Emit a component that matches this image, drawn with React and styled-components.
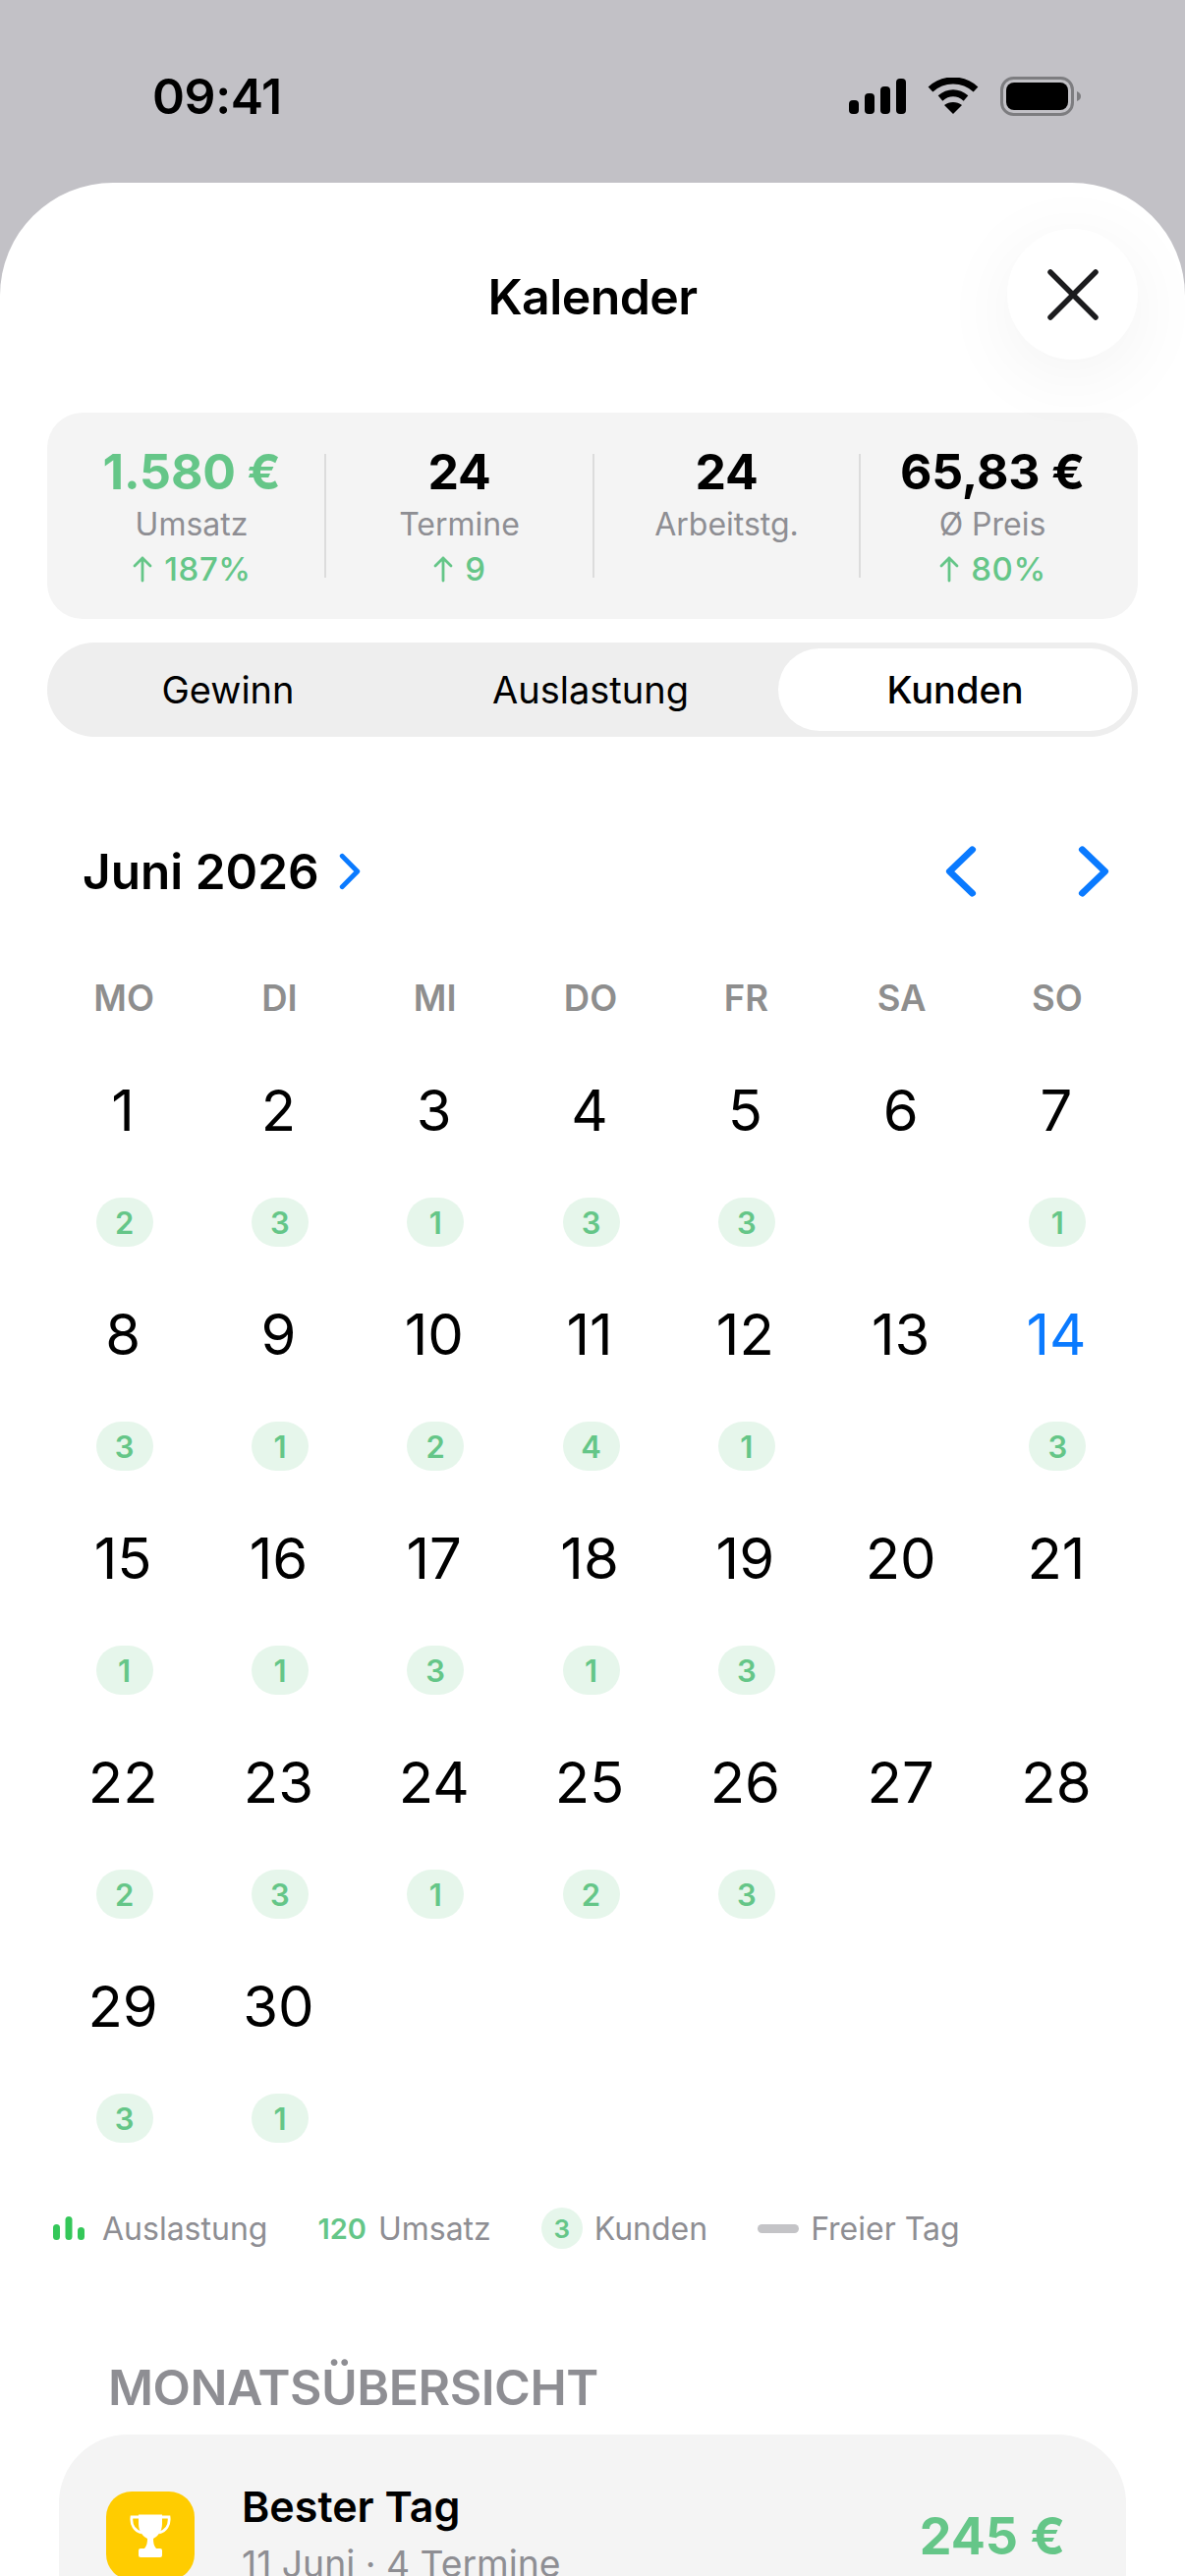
import styled, { createGlobalStyle } from "styled-components";
import { X } from "lucide-react";

const GlobalStyle = createGlobalStyle`
  html, body {
    margin: 0;
    padding: 0;
    background: #c2c1c6;
  }
  * {
    box-sizing: border-box;
  }
`

const Screen = styled.div`
  width: 1206px;
  height: 2622px;
  overflow: hidden;
  background: #c2c1c6;
  font-family: Inter, "Noto Sans", sans-serif;
  color: #000;
`

const StatusBar = styled.div`
  display: flex;
  justify-content: space-between;
  align-items: center;
  height: 186px;
  padding: 10px 106px 0 155px;
`

const Time = styled.div`
  font-size: 50px;
  font-weight: 600;
  letter-spacing: -0.4px;
`

const StatusIcons = styled.div`
  display: flex;
  align-items: center;
  gap: 22px;
`

const Sheet = styled.div`
  position: relative;
  height: 2436px;
  background: #fff;
  border-radius: 115px 115px 0 0;
`

const Header = styled.div`
  height: 234px;
  padding-bottom: 3px;
  display: flex;
  justify-content: center;
  align-items: center;
  font-size: 50px;
  font-weight: 600;
  letter-spacing: -0.6px;
`

const CloseButton = styled.div`
  position: absolute;
  top: 47px;
  right: 48px;
  width: 133px;
  height: 133px;
  border-radius: 50%;
  background: #fff;
  box-shadow: 0 16px 80px rgba(0, 0, 0, 0.055);
  display: flex;
  align-items: center;
  justify-content: center;
  color: #1c1c1e;
`

const StatsCard = styled.div`
  display: grid;
  grid-template-columns: 284px 273px 271px 1fr;
  margin: 0 48px;
  height: 210px;
  padding-top: 42px;
  background: #f4f4f4;
  border-radius: 36px;
`

const Stat = styled.div`
  height: 126px;
  display: flex;
  flex-direction: column;
  align-items: center;
  border-right: 2px solid #dcdcdc;

  &:first-child {
    padding-left: 12px;
  }

  &:last-child {
    padding-right: 14px;
    border-right: none;
  }
`

const StatValue = styled.div`
  font-size: 50px;
  line-height: 50px;
  margin-top: -7px;
  font-weight: 700;
  letter-spacing: -0.2px;
  white-space: nowrap;
  color: ${props => props.$green ? "#65c688" : "#000"};
`

const StatLabel = styled.div`
  font-size: 32px;
  line-height: 38px;
  margin-top: 10px;
  color: #8e8e93;
`

const StatDelta = styled.div`
  display: flex;
  align-items: center;
  gap: 11px;
  font-size: 33px;
  line-height: 38px;
  margin-top: 7px;
  font-weight: 500;
  letter-spacing: 0.6px;
  color: #65c688;
`

const Segments = styled.div`
  display: grid;
  grid-template-columns: 356px 382px 360px;
  align-items: center;
  margin: 24px 48px 0;
  height: 96px;
  padding: 6px;
  background: #eeeeee;
  border-radius: 48px;
`

const Segment = styled.div`
  height: 84px;
  display: flex;
  align-items: center;
  justify-content: center;
  border-radius: 42px;
  font-size: 38px;
  font-weight: ${props => props.$active ? 500 : 400};
  background: ${props => props.$active ? "#fff" : "transparent"};
`

const MonthBar = styled.div`
  display: flex;
  align-items: center;
  justify-content: space-between;
  margin-top: 99px;
  height: 76px;
  padding: 0 75px 0 84px;
`

const MonthTitle = styled.div`
  display: flex;
  align-items: center;
  gap: 19px;
  font-size: 49.5px;
  font-weight: 600;
`

const MonthNav = styled.div`
  display: flex;
  align-items: center;
  gap: 99px;
`

const Weekdays = styled.div`
  display: grid;
  grid-template-columns: repeat(7, 158.3px);
  padding-left: 47px;
  margin-top: 69px;
`

const Weekday = styled.div`
  text-align: center;
  font-size: 36.5px;
  line-height: 44px;
  font-weight: 600;
  color: #8e8e8e;
`

const Days = styled.div`
  display: grid;
  grid-template-columns: repeat(7, 158.3px);
  grid-auto-rows: 228px;
  padding-left: 46px;
  margin-top: 56px;
`

const Cell = styled.div`
  display: flex;
  flex-direction: column;
  align-items: center;
`

const DayNumber = styled.div`
  height: 72px;
  line-height: 72px;
  font-size: 58px;
  font-weight: 400;
  color: ${props => props.$today ? "#0a7aff" : "#000"};
`

const CountPill = styled.div`
  margin: 53px 0 0 3px;
  width: 58px;
  height: 50px;
  border-radius: 25px;
  background: #e6f6eb;
  color: #65c688;
  font-size: 31px;
  font-weight: 600;
  display: flex;
  align-items: center;
  justify-content: center;
`

const Legend = styled.div`
  display: flex;
  align-items: center;
  gap: 51px;
  margin-top: 9px;
  padding-left: 54px;
  height: 50px;
  font-size: 32px;
  color: #8e8e93;
`

const LegendItem = styled.div`
  display: flex;
  align-items: center;
  gap: ${props => props.$gap}px;
`

const LegendValue = styled.span`
  color: #65c688;
  font-size: 29px;
  font-weight: 600;
`

const LegendPill = styled.div`
  width: 42px;
  height: 42px;
  border-radius: 21px;
  background: #e6f6eb;
  color: #65c688;
  font-size: 26px;
  font-weight: 600;
  display: flex;
  align-items: center;
  justify-content: center;
`

const LegendDash = styled.div`
  width: 42px;
  height: 9px;
  border-radius: 5px;
  background: #c4c4c7;
`

const SectionTitle = styled.div`
  margin-top: 107px;
  padding-left: 110px;
  font-size: 50px;
  line-height: 60px;
  font-weight: 600;
  letter-spacing: -0.5px;
  color: #8e8e93;
`

const OverviewCard = styled.div`
  display: flex;
  align-items: flex-start;
  margin: 18px 60px 0;
  height: 300px;
  padding: 58px 62px 0 48px;
  background: #f4f4f4;
  border-radius: 70px;
`

const TrophyBox = styled.div`
  width: 90px;
  height: 90px;
  border-radius: 26px;
  background: #ffcc00;
  display: flex;
  align-items: center;
  justify-content: center;
`

const OverviewText = styled.div`
  flex: 1;
  margin-left: 48px;
  margin-top: -13px;
`

const OverviewTitle = styled.div`
  font-size: 43px;
  line-height: 56px;
  font-weight: 600;
`

const OverviewSub = styled.div`
  font-size: 37.3px;
  line-height: 44px;
  margin-top: 9px;
  color: #8e8e93;
`

const OverviewValue = styled.div`
  font-size: 52px;
  font-weight: 700;
  color: #65c688;
  margin-top: 14px;
`

const weeks = [
  [[1, 2], [2, 3], [3, 1], [4, 3], [5, 3], [6], [7, 1]],
  [[8, 3], [9, 1], [10, 2], [11, 4], [12, 1], [13], [14, 3]],
  [[15, 1], [16, 1], [17, 3], [18, 1], [19, 3], [20], [21]],
  [[22, 2], [23, 3], [24, 1], [25, 2], [26, 3], [27], [28]],
  [[29, 3], [30, 1]],
];

const stats = [
  { value: "1.580 €", label: "Umsatz", delta: "187%", green: true },
  { value: "24", label: "Termine", delta: "9" },
  { value: "24", label: "Arbeitstg." },
  { value: "65,83 €", label: "Ø Preis", delta: "80%" },
];

function Chevron({ dir = "right", color = "#0a7aff", w = 28, h = 46, sw = 6 }) {
  const d = dir === "right" ? "M5 4 L23 23 L5 42" : "M23 4 L5 23 L23 42";
  return (
    <svg width={w} height={h} viewBox="0 0 28 46" fill="none" preserveAspectRatio="none">
      <path d={d} stroke={color} strokeWidth={sw * 28 / w} strokeLinecap="round" strokeLinejoin="round" />
    </svg>
  );
}

function UpArrow() {
  return (
    <svg width="22" height="28" viewBox="0 0 22 28" fill="none">
      <path d="M11 26 V3 M3 11 L11 3 L19 11" stroke="#65c688" strokeWidth="2.8" strokeLinecap="round" strokeLinejoin="round" />
    </svg>
  );
}

function StatusGlyphs() {
  return (
    <StatusIcons>
      <svg width="58" height="38" viewBox="0 0 58 38">
        <rect x="0" y="23" width="10" height="14" rx="4" fill="#000" />
        <rect x="16" y="16" width="10" height="21" rx="4" fill="#000" />
        <rect x="32" y="9" width="10" height="28" rx="4" fill="#000" />
        <rect x="48" y="1" width="10" height="36" rx="4" fill="#000" />
      </svg>
      <svg width="52" height="38" viewBox="0 0 52 38" fill="none">
        <path d="M3 12 C16 0 36 0 49 12" stroke="#000" strokeWidth="7" strokeLinecap="butt" />
        <path d="M13 21 C21 14 31 14 39 21" stroke="#000" strokeWidth="7" />
        <path d="M26 37 L17 28 C22 24 30 24 35 28 Z" fill="#000" />
      </svg>
      <svg width="82" height="40" viewBox="0 0 82 40" fill="none">
        <rect x="1.5" y="1.5" width="72" height="37" rx="12" stroke="#7d7d80" strokeWidth="3" />
        <rect x="6" y="6" width="63" height="28" rx="8" fill="#000" />
        <path d="M78 15 C81 16 82 18 82 20 C82 22 81 24 78 25 Z" fill="#7d7d80" />
      </svg>
    </StatusIcons>
  );
}

function Trophy() {
  return (
    <svg width="42" height="44" viewBox="0 0 42 44" fill="none">
      <path d="M9 0.5 H33 V10 C33 18 28 23 24 25 C24 29 24.5 32 27 35 H15 C17.500 32 18 29 18 25 C14 23 9 18 9 10 Z" fill="#fff" />
      <path d="M9 3 H2 C1 11 5 17 12 19 M33 3 H40 C41 11 37 17 30 19" stroke="#fff" strokeWidth="2.8" />
      <rect x="9" y="35" width="24" height="9" rx="2" fill="#fff" />
    </svg>
  );
}

export default function App() {
  return (
    <Screen>
      <GlobalStyle />

      <StatusBar>
        <Time>09:41</Time>
        <StatusGlyphs />
      </StatusBar>

      <Sheet>
        <Header>Kalender</Header>
        <CloseButton>
          <X size={92} strokeWidth={1.43} />
        </CloseButton>

        <StatsCard>
          {stats.map(s => (
            <Stat key={s.label}>
              <StatValue $green={s.green}>{s.value}</StatValue>
              <StatLabel>{s.label}</StatLabel>
              {s.delta && (
                <StatDelta>
                  <UpArrow />
                  {s.delta}
                </StatDelta>
              )}
            </Stat>
          ))}
        </StatsCard>

        <Segments>
          <Segment>Gewinn</Segment>
          <Segment>Auslastung</Segment>
          <Segment $active>Kunden</Segment>
        </Segments>

        <MonthBar>
          <MonthTitle>
            Juni 2026
            <Chevron w={24} h={38} sw={5} />
          </MonthTitle>
          <MonthNav>
            <Chevron dir="left" w={36} h={54} sw={7} />
            <Chevron w={36} h={54} sw={7} />
          </MonthNav>
        </MonthBar>

        <Weekdays>
          {["MO", "DI", "MI", "DO", "FR", "SA", "SO"].map(d => (
            <Weekday key={d}>{d}</Weekday>
          ))}
        </Weekdays>

        <Days>
          {weeks.flat().map(([day, count]) => (
            <Cell key={day}>
              <DayNumber $today={day === 14}>{day}</DayNumber>
              {count && <CountPill>{count}</CountPill>}
            </Cell>
          ))}
        </Days>

        <Legend>
          <LegendItem $gap={18}>
            <svg width="32" height="24" viewBox="0 0 32 24">
              <rect x="0" y="8" width="7" height="16" rx="3.5" fill="#34c759" />
              <rect x="12.500" y="0" width="7" height="24" rx="3.5" fill="#34c759" />
              <rect x="25" y="11" width="7" height="13" rx="3.5" fill="#34c759" />
            </svg>
            Auslastung
          </LegendItem>
          <LegendItem $gap={12}>
            <LegendValue>120</LegendValue>
            Umsatz
          </LegendItem>
          <LegendItem $gap={12}>
            <LegendPill>3</LegendPill>
            Kunden
          </LegendItem>
          <LegendItem $gap={12}>
            <LegendDash />
            Freier Tag
          </LegendItem>
        </Legend>

        <SectionTitle>MONATSÜBERSICHT</SectionTitle>

        <OverviewCard>
          <TrophyBox>
            <Trophy />
          </TrophyBox>
          <OverviewText>
            <OverviewTitle>Bester Tag</OverviewTitle>
            <OverviewSub>11 Juni · 4 Termine</OverviewSub>
          </OverviewText>
          <OverviewValue>245 €</OverviewValue>
        </OverviewCard>
      </Sheet>
    </Screen>
  );
}
